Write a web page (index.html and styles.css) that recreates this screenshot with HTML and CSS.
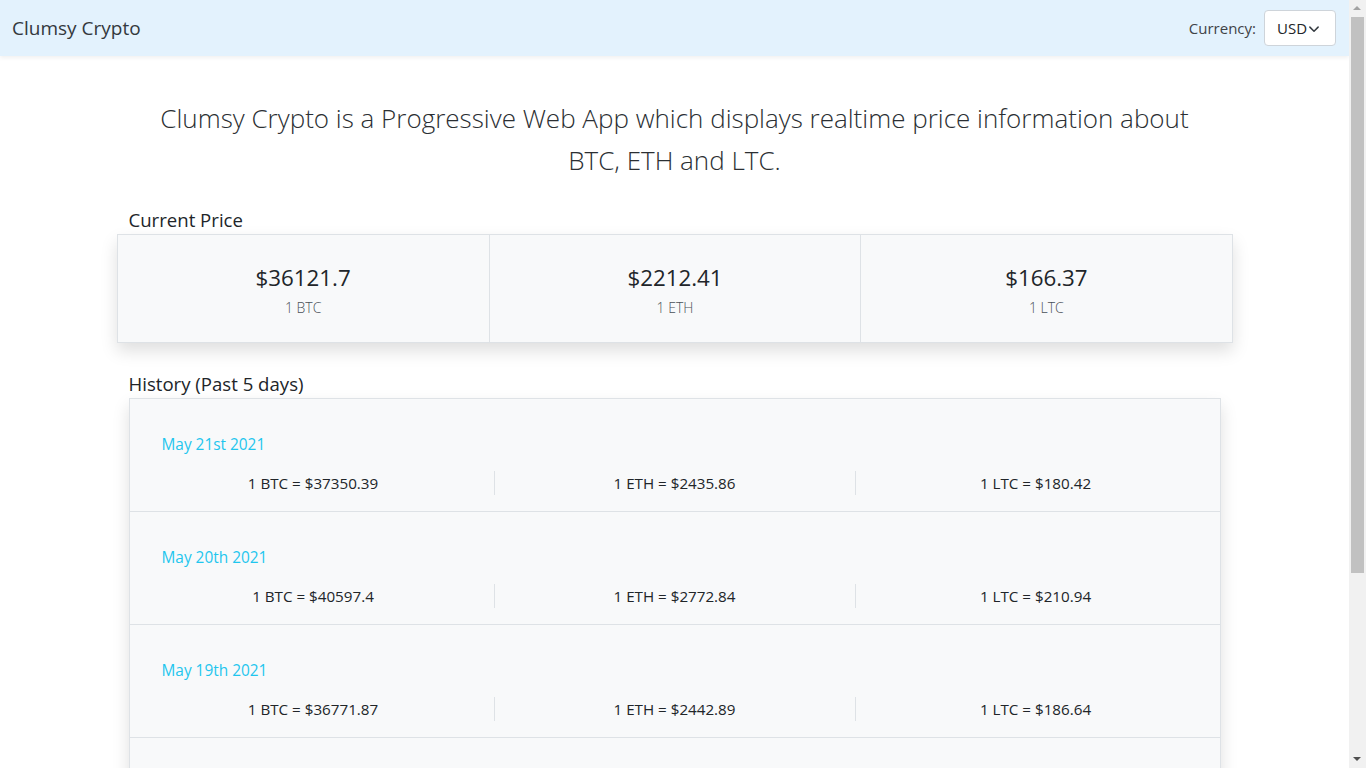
FILE: index.html
```html
<!DOCTYPE html>
<html lang="en">
<head>
<meta charset="utf-8">
<title>Clumsy Crypto</title>
<link rel="stylesheet" href="styles.css">
</head>
<body>
<div class="page">
<nav class="navbar">
  <span class="brand">Clumsy Crypto</span>
  <div class="currency">
    <label class="currency-label">Currency:</label>
    <div class="select">USD<svg class="chev" viewBox="0 0 16 16" width="12" height="12"><path d="M2.5 5.5 8 11l5.5-5.5" fill="none" stroke="#343a40" stroke-width="2" stroke-linecap="round" stroke-linejoin="round"/></svg></div>
  </div>
</nav>
<main class="container">
  <p class="intro">Clumsy Crypto is a Progressive Web App which displays realtime price information about BTC, ETH and LTC.</p>
  <h2 class="section-title">Current Price</h2>
  <div class="prices">
    <div class="price-cell"><div class="price">$36121.7</div><div class="unit">1 BTC</div></div>
    <div class="price-cell"><div class="price">$2212.41</div><div class="unit">1 ETH</div></div>
    <div class="price-cell"><div class="price">$166.37</div><div class="unit">1 LTC</div></div>
  </div>
  <h2 class="section-title history-title">History (Past 5 days)</h2>
  <div class="history">
    <div class="day">
      <div class="date">May 21st 2021</div>
      <div class="rates"><div class="rate">1 BTC = $37350.39</div><div class="rate">1 ETH = $2435.86</div><div class="rate">1 LTC = $180.42</div></div>
    </div>
    <div class="day">
      <div class="date">May 20th 2021</div>
      <div class="rates"><div class="rate">1 BTC = $40597.4</div><div class="rate">1 ETH = $2772.84</div><div class="rate">1 LTC = $210.94</div></div>
    </div>
    <div class="day">
      <div class="date">May 19th 2021</div>
      <div class="rates"><div class="rate">1 BTC = $36771.87</div><div class="rate">1 ETH = $2442.89</div><div class="rate">1 LTC = $186.64</div></div>
    </div>
    <div class="day">
      <div class="date">May 18th 2021</div>
      <div class="rates"><div class="rate">1 BTC = $42909.4</div><div class="rate">1 ETH = $3382.74</div><div class="rate">1 LTC = $247.24</div></div>
    </div>
  </div>
</main>
</div>
<div class="scrollbar" aria-hidden="true">
  <div class="sb-arrow sb-up"></div>
  <div class="sb-thumb"></div>
  <div class="sb-arrow sb-down"></div>
</div>
</body>
</html>
```

FILE: styles.css
```css
* { box-sizing: border-box; }
html, body { margin: 0; padding: 0; }
body {
  font-family: "Open Sans", "Noto Sans", sans-serif;
  font-size: 16px;
  line-height: 1.5;
  color: #212529;
  background: #fff;
  height: 768px;
  overflow: hidden;
}
.page {
  width: 1349px;
}
.navbar {
  height: 56px;
  background: #e3f2fd;
  display: flex;
  align-items: center;
  justify-content: space-between;
  padding: 0 13px 0 12px;
  box-shadow: 0 2px 4px rgba(0,0,0,0.06);
  position: relative;
}
.brand {
  font-size: 19px;
  color: #212529;
  opacity: 0.9;
}
.currency { display: flex; align-items: center; gap: 8px; }
.currency-label { font-size: 15px; color: #3f4347; }
.select {
  width: 72px;
  height: 36px;
  background: #fff;
  border: 1px solid #ced4da;
  border-radius: 4px;
  display: flex;
  align-items: center;
  padding-left: 12px;
  font-size: 15px;
  color: #212529;
  gap: 1px;
}
.chev { margin-top: 1px; }
.container {
  width: 1140px;
  margin: 0 auto;
  padding: 41px 12px 40px;
}
.intro {
  margin: 0 0 27px;
  padding: 0 38px;
  text-align: center;
  font-size: 26px;
  font-weight: 300;
  line-height: 42px;
  color: #2b2f33;
}
.section-title {
  margin: 0 0 2px;
  padding-left: 12px;
  font-size: 18.6px;
  font-weight: 400;
  line-height: 24px;
}
.prices {
  display: grid;
  grid-template-columns: repeat(3, 1fr);
  border: 1px solid #dee2e6;
  background: #f8f9fa;
  box-shadow: 0 8px 16px rgba(0,0,0,0.13);
  height: 109px;
}
.price-cell {
  display: flex;
  flex-direction: column;
  align-items: center;
  padding-top: 27px;
  border-left: 1px solid #dee2e6;
}
.price-cell:first-child { border-left: none; }
.price { font-size: 22.3px; line-height: 32px; }
.unit { font-size: 14px; font-weight: 300; line-height: 22px; color: #495057; margin-top: 3px; }
.history-title { margin-top: 29px; }
.history {
  margin: 0 12px;
  border: 1px solid #dee2e6;
  background: #f8f9fa;
  box-shadow: 0 8px 16px rgba(0,0,0,0.13);
}
.day {
  height: 113px;
  border-top: 1px solid #dee2e6;
  padding: 34px 4px 0 3px;
}
.day:first-child { border-top: none; height: 112px; }
.date {
  color: #1fc6ee;
  font-size: 15.4px;
  line-height: 24px;
  padding-left: 29px;
}
.rates {
  display: grid;
  grid-template-columns: repeat(3, 1fr);
  margin-top: 14px;
}
.rate {
  text-align: center;
  font-size: 15.2px;
  line-height: 24px;
  border-left: 1px solid #dee2e6;
}
.rate:first-child { border-left: none; }

.scrollbar {
  position: fixed;
  top: 0;
  right: 0;
  width: 17px;
  height: 768px;
  background: #f1f1f1;
  display: flex;
  flex-direction: column;
  align-items: center;
}
.sb-arrow {
  height: 17px;
  width: 17px;
  position: relative;
}
.sb-up::after, .sb-down::after {
  content: "";
  position: absolute;
  left: 4px;
  border-left: 4.5px solid transparent;
  border-right: 4.5px solid transparent;
}
.sb-up::after { top: 6px; border-bottom: 4.5px solid #a3a3a3; }
.sb-down::after { top: 6px; border-top: 4.5px solid #505050; }
.sb-thumb {
  width: 13px;
  height: 556px;
  background: #c1c1c1;
}
.sb-down { margin-top: auto; }
```
